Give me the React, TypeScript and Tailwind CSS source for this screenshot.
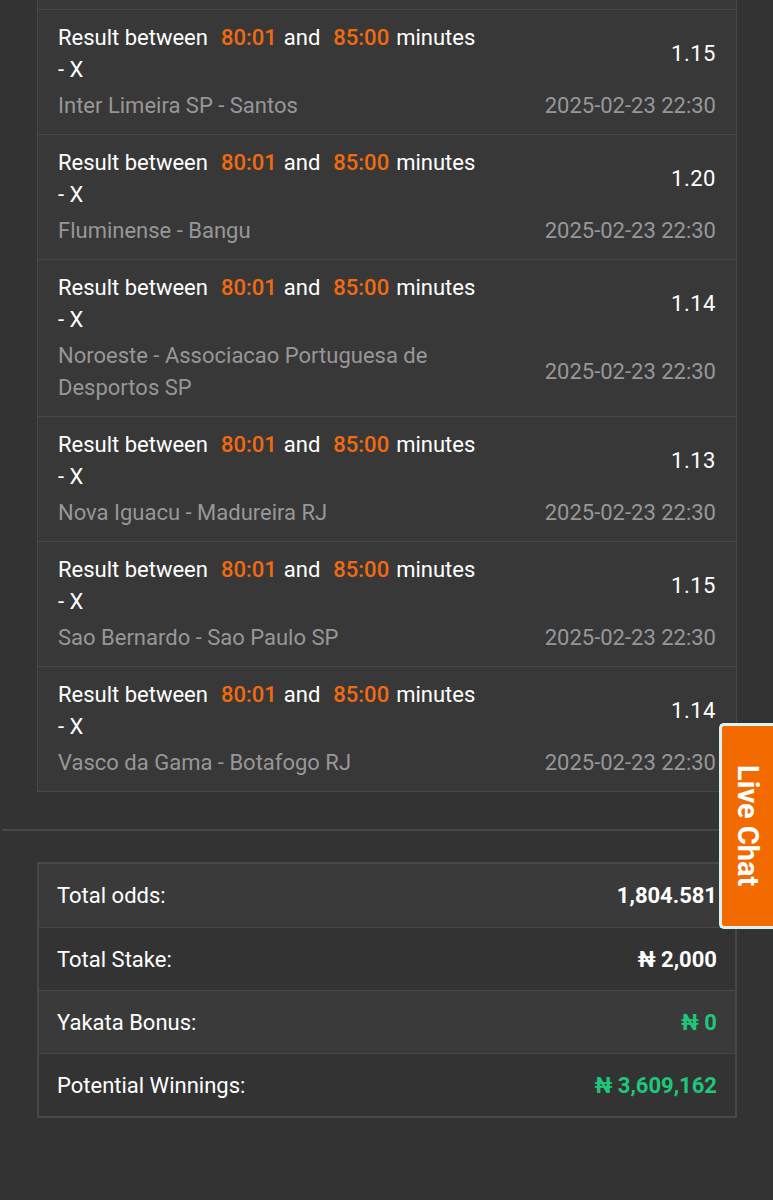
import React from 'react';

type Selection = {
  odds: string;
  match: string;
  date: string;
};

const selections: Selection[] = [
  { odds: '1.15', match: 'Inter Limeira SP - Santos', date: '2025-02-23 22:30' },
  { odds: '1.20', match: 'Fluminense - Bangu', date: '2025-02-23 22:30' },
  { odds: '1.14', match: 'Noroeste - Associacao Portuguesa de Desportos SP', date: '2025-02-23 22:30' },
  { odds: '1.13', match: 'Nova Iguacu - Madureira RJ', date: '2025-02-23 22:30' },
  { odds: '1.15', match: 'Sao Bernardo - Sao Paulo SP', date: '2025-02-23 22:30' },
  { odds: '1.14', match: 'Vasco da Gama - Botafogo RJ', date: '2025-02-23 22:30' },
];

const SelectionRow: React.FC<{ item: Selection }> = ({ item }) => (
  <div className="border-t border-[#484848] px-5 pt-3 pb-3 text-[22px] leading-[32px]">
    <div className="flex items-center justify-between">
      <div className="w-[440px] text-white">
        <span className="mr-[13px]">Result between</span>
        <span className="mr-[7px] font-medium text-[#f26a0f]">80:01</span>
        <span className="mr-[13px]">and</span>
        <span className="mr-[7px] font-medium text-[#f26a0f]">85:00</span>
        <span>minutes</span>
        <br />
        <span>- X</span>
      </div>
      <div className="text-white tracking-[0.5px]">{item.odds}</div>
    </div>
    <div className="mt-1 flex items-center justify-between text-[#979797]">
      <div className="w-[400px]">{item.match}</div>
      <div>{item.date}</div>
    </div>
  </div>
);

const SummaryRow: React.FC<{ label: string; value: string; green?: boolean; light?: boolean }> = ({
  label,
  value,
  green,
  light,
}) => (
  <div
    className={`flex h-[63px] items-center justify-between border-t border-[#484848] pl-[18px] pr-[18px] text-[22px] first:border-t-0 ${
      light ? 'bg-[#3a3a3a]' : 'bg-[#333333]'
    }`}
  >
    <span className="text-white">{label}</span>
    <span className={`font-bold ${green ? 'text-[#1ec77a]' : 'text-white'}`}>{value}</span>
  </div>
);

const App: React.FC = () => {
  return (
    <div className="relative min-h-[1200px] bg-[#333333] font-['Roboto',sans-serif]">
      <div className="ml-[37px] w-[700px] border-x border-b border-[#484848] bg-[#383838]">
        <div className="h-[9px]" />
        {selections.map((s, i) => (
          <SelectionRow key={i} item={s} />
        ))}
      </div>

      <div className="mt-[37px] ml-[2px] border-t-2 border-[#474747]" />

      <div className="mt-[31px] ml-[37px] w-[700px] border-2 border-[#484848]">
        <SummaryRow label="Total odds:" value="1,804.581" light />
        <SummaryRow label="Total Stake:" value="₦ 2,000" />
        <SummaryRow label="Yakata Bonus:" value="₦ 0" green light />
        <SummaryRow label="Potential Winnings:" value="₦ 3,609,162" green />
      </div>

      <button className="absolute top-[723px] right-0 flex h-[206px] w-[54px] items-center justify-center rounded-l-[5px] border-[3px] border-r-0 border-[#d9f3f2] bg-[#f26a00]">
        <span className="rotate-90 whitespace-nowrap text-[29px] font-bold text-white">Live Chat</span>
      </button>
    </div>
  );
};

export default App;
